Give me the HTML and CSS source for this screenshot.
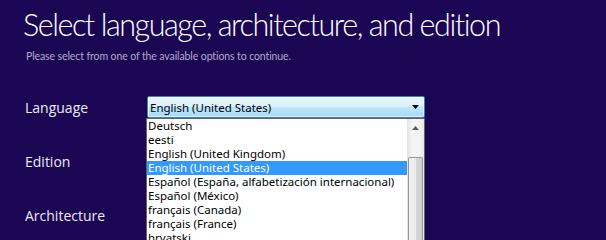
FILE: index.html
```html
<!DOCTYPE html>
<html lang="en">
<head>
<meta charset="utf-8">
<title>Select language, architecture, and edition</title>
<link rel="stylesheet" href="styles.css">
</head>
<body>
<div class="page">
  <h1 class="title">Select language, architecture, and edition</h1>
  <p class="subtitle">Please select from one of the available options to continue.</p>
  <div class="form">
    <div class="row">
      <span class="label">Language</span>
      <div class="combo">
        <div class="combo-box">
          <span class="combo-value">English (United States)</span>
          <svg class="combo-arrow" width="7" height="4" viewBox="0 0 7 4"><path d="M0 0H7L3.5 4Z" fill="#000"/></svg>
        </div>
        <div class="list">
          <ul class="options">
            <li>Deutsch</li>
            <li>eesti</li>
            <li>English (United Kingdom)</li>
            <li class="selected">English (United States)</li>
            <li>Español (España, alfabetización internacional)</li>
            <li>Español (México)</li>
            <li>français (Canada)</li>
            <li>français (France)</li>
            <li>hrvatski</li>
          </ul>
          <div class="scrollbar">
            <div class="scroll-up"><svg width="7" height="4" viewBox="0 0 7 4"><path d="M0 4H7L3.5 0Z" fill="#5a5a5a"/></svg></div>
            <div class="thumb"></div>
          </div>
        </div>
      </div>
    </div>
    <div class="row"><span class="label">Edition</span></div>
    <div class="row"><span class="label">Architecture</span></div>
  </div>
</div>
</body>
</html>
```
FILE: styles.css
```css
html, body {
  margin: 0;
  padding: 0;
  background: #1b0653;
  height: 100%;
  overflow: hidden;
}
.page {
  padding: 5px 0 0 23px;
  font-family: "Open Sans", "Liberation Sans", sans-serif;
}
.title {
  margin: 0;
  font-family: "Lato", "Open Sans", sans-serif;
  font-weight: 300;
  font-size: 30.5px;
  line-height: 39px;
  color: #ffffff;
  letter-spacing: -1.45px;
}
.subtitle {
  margin: 5px 0 0 3px;
  font-family: "Lato", "Open Sans", sans-serif;
  font-size: 10.5px;
  line-height: 14px;
  color: #b3aacb;
  letter-spacing: -0.1px;
}
.form {
  margin-top: 33px;
  display: flex;
  flex-direction: column;
  gap: 32px;
}
.row {
  display: flex;
  align-items: center;
  height: 22px;
}
.label {
  width: 122px;
  padding-left: 2px;
  font-size: 14px;
  color: #eceaf4;
}
.combo {
  position: relative;
  width: 278px;
  height: 22px;
  font-family: "Noto Sans", sans-serif;
  font-size: 11.5px;
}
.combo-box {
  box-sizing: border-box;
  height: 22px;
  border: 1px solid #3c7fb1;
  border-radius: 2px;
  box-shadow: inset 0 0 0 1px rgba(255, 255, 255, 0.6);
  background: linear-gradient(#eaf6fd 0%, #d9f0fc 50%, #bee6fd 51%, #a7d9f5 100%);
  display: flex;
  align-items: center;
  justify-content: space-between;
  padding: 0 5px 0 2px;
  color: #000;
}
.list {
  position: absolute;
  left: -1px;
  top: 22px;
  width: 279px;
  height: 130px;
  box-sizing: border-box;
  background: #fff;
  border: 1px solid #646464;
  border-bottom: none;
  display: flex;
}
.options {
  list-style: none;
  margin: 0;
  padding: 0;
  flex: 1;
}
.options li {
  height: 14px;
  line-height: 14px;
  padding-left: 1px;
  color: #000;
  white-space: nowrap;
}
.options li.selected {
  background: #3399ff;
  color: #fff;
}
.scrollbar {
  width: 17px;
  background: linear-gradient(90deg, #e3e3e3, #f4f4f4 30%, #f4f4f4 70%, #e8e8e8);
  display: flex;
  flex-direction: column;
  align-items: center;
}
.scroll-up {
  height: 17px;
  display: flex;
  align-items: center;
  justify-content: center;
}
.thumb {
  margin-top: 21px;
  width: 15px;
  flex: 1;
  box-sizing: border-box;
  border: 1px solid #979797;
  border-bottom: none;
  border-radius: 2px 2px 0 0;
  background: linear-gradient(90deg, #f2f2f2, #ebebeb 50%, #d6d6d6 51%, #d0d0d0);
}
```
